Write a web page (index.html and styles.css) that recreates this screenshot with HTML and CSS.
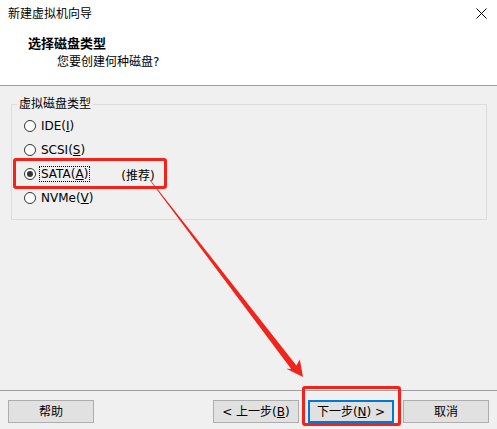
FILE: index.html
```html
<!DOCTYPE html>
<html lang="zh-CN">
<head>
<meta charset="utf-8">
<title>新建虚拟机向导</title>
<link rel="stylesheet" href="styles.css">
</head>
<body>
<div class="window">
  <div class="titlebar">
    <span class="title">新建虚拟机向导</span>
    <svg class="close" width="11" height="11" viewBox="0 0 11 11"><path d="M0.5 0.5 L10.5 10.5 M10.5 0.5 L0.5 10.5" stroke="#000" stroke-width="1" fill="none"/></svg>
  </div>
  <div class="header">
    <div class="h-title">选择磁盘类型</div>
    <div class="h-sub">您要创建何种磁盘?</div>
  </div>
  <div class="content">
    <fieldset class="group">
      <legend class="group-label">虚拟磁盘类型</legend>
      <div class="options">
        <div class="option"><span class="radio"></span><span class="label">IDE(<u>I</u>)</span></div>
        <div class="option"><span class="radio"></span><span class="label">SCSI(<u>S</u>)</span></div>
        <div class="option"><span class="radio checked"></span><span class="label focus">SATA(<u>A</u>)</span><span class="note">(推荐)</span></div>
        <div class="option"><span class="radio"></span><span class="label">NVMe(<u>V</u>)</span></div>
      </div>
    </fieldset>
  </div>
  <div class="buttons">
    <button class="btn">帮助</button>
    <div class="btn-group">
      <button class="btn">&lt; 上一步(<u>B</u>)</button>
      <button class="btn default">下一步(<u>N</u>) &gt;</button>
      <button class="btn">取消</button>
    </div>
  </div>
  <div class="mark mark-sata"></div>
  <div class="mark mark-next"></div>
  <svg class="arrow" width="497" height="429" viewBox="0 0 497 429">
    <polygon fill="#f2231a" points="149.2,179.6 150.8,180.4 296.4,365.4 299.8,359.4 303,377 286.4,368.8 291.2,369"/>
  </svg>
</div>
</body>
</html>
```
FILE: styles.css
```css
* { box-sizing: border-box; }
html, body {
  margin: 0;
  padding: 0;
  width: 497px;
  height: 429px;
  overflow: hidden;
  background: #f0f0f0;
  font-family: "DejaVu Sans", "Noto Sans CJK SC", sans-serif;
  font-size: 12px;
  color: #000;
}
.window {
  position: relative;
  width: 497px;
  height: 429px;
  display: flex;
  flex-direction: column;
}
.titlebar {
  height: 28px;
  background: #fff;
  display: flex;
  align-items: center;
  justify-content: space-between;
  padding: 0 10px 0 8px;
  line-height: 16px;
}
.title { font-size: 12px; }
.close { display: block; margin-top: -1px; }
.header {
  height: 58px;
  background: #fff;
  border-bottom: 1px solid #a0a0a0;
  padding: 7px 0 0 28px;
}
.h-title {
  font-family: "Noto Sans CJK SC", sans-serif;
  font-weight: bold;
  font-size: 13px;
  line-height: 16px;
}
.h-sub {
  margin-top: 3px;
  padding-left: 29px;
  line-height: 16px;
}
.content {
  flex: 1;
  padding: 10px 10px 0 11px;
}
.group {
  margin: 0;
  width: 476px;
  border: 1px solid #dcdcdc;
  padding: 0 0 9px 5px;
}
.group-label {
  padding: 0 2px;
  line-height: 16px;
}
.options {
  padding: 2px 0 0 7px;
}
.option {
  height: 24px;
  display: flex;
  align-items: center;
}
.radio {
  width: 12px;
  height: 12px;
  border: 1px solid #333;
  border-radius: 50%;
  background: #fff;
  margin-right: 3px;
  display: flex;
  align-items: center;
  justify-content: center;
}
.radio.checked::after {
  content: "";
  width: 6px;
  height: 6px;
  border-radius: 50%;
  background: #333;
}
.label {
  line-height: 14px;
  padding: 0 1px;
  border: 1px dotted transparent;
}
.label.focus { border-color: #000; }
.note { margin-left: 31px; }
.buttons {
  height: 39px;
  border-top: 1px solid #a0a0a0;
  padding: 9px 8px 0 8px;
  display: flex;
  justify-content: space-between;
  align-items: flex-start;
}
.btn-group {
  display: flex;
  gap: 9px;
}
.btn {
  width: 86px;
  height: 23px;
  margin: 0;
  padding: 0;
  background: #e1e1e1;
  border: 1px solid #adadad;
  font-family: "DejaVu Sans", "Noto Sans CJK SC", sans-serif;
  font-size: 12px;
  color: #000;
  line-height: 16px;
}
.btn.default { border: 2px solid #0078d7; }
.mark {
  position: absolute;
  border: 3px solid #f2231a;
  border-radius: 3px;
}
.mark-sata { left: 13px; top: 158px; width: 154px; height: 31px; }
.mark-next { left: 302px; top: 386px; width: 99px; height: 40px; }
.arrow {
  position: absolute;
  left: 0;
  top: 0;
  pointer-events: none;
}
```
